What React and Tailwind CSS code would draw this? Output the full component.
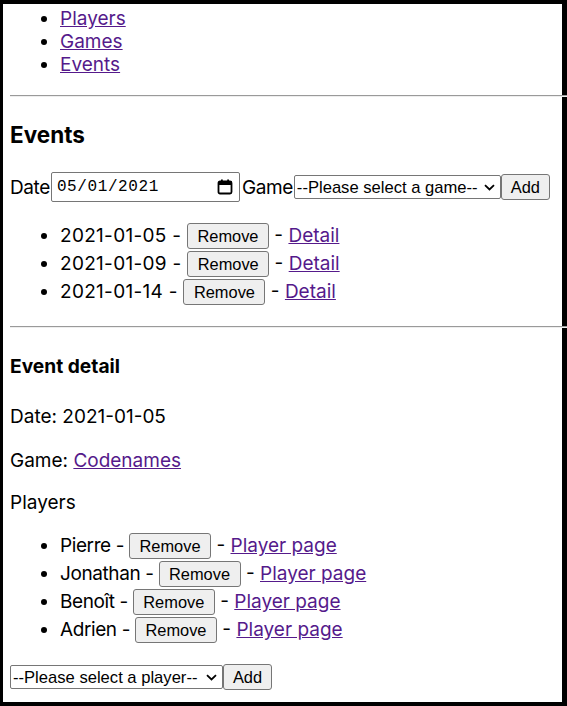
import React from "react";

function Btn({ children, className = "" }) {
  return (
    <span
      className={
        "inline-block h-[26px] leading-[24px] border border-[#767676] rounded-[3px] bg-[#efefef] text-black text-[16.4px] font-['Liberation_Sans',Arial,sans-serif] " +
        className
      }
    >
      {children}
    </span>
  );
}

function Chevron() {
  return (
    <svg width="11" height="7" viewBox="0 0 11 7" className="shrink-0">
      <path d="M1 1.2 L5.5 5.5 L10 1.2" fill="none" stroke="#000" strokeWidth="1.8" />
    </svg>
  );
}

function Select({ text, w }) {
  return (
    <span
      className={
        "inline-flex items-center justify-between h-[24px] border border-[#767676] rounded-[2px] bg-white pl-[2px] pr-[5px] text-[16.6px] font-['Liberation_Sans',Arial,sans-serif] text-black " +
        w
      }
    >
      <span>{text}</span>
      <Chevron />
    </span>
  );
}

function Link({ children }) {
  return <a className="text-[#551a8b] underline">{children}</a>;
}

export default function App() {
  return (
    <div className="w-[567px] h-[706px] bg-black pt-[4px] pl-[3px] overflow-hidden">
      <div className="w-[559px] h-[698px] bg-white pl-[7px] text-black font-['Inter',sans-serif] text-[19px] leading-[23px]">
        <ul className="list-disc pl-[50px] pt-[3px]">
          <li><Link>Players</Link></li>
          <li><Link>Games</Link></li>
          <li><Link>Events</Link></li>
        </ul>
        <div className="mt-[19px] h-[2px] w-[557px] border-t border-b border-t-[#9a9a9a] border-b-[#eeeeee]" />
        <h2 className="mt-[21px] text-[22.5px] leading-[34px] font-bold">Events</h2>
        <div className="mt-[20px] h-[30px] flex items-center">
          <span className="tracking-[-0.4px]">Date</span>
          <span className="ml-[1px] w-[189px] h-[30px] border border-[#767676] rounded-[2px] flex items-center justify-between pl-[5px] pr-[6px]">
            <span className="font-['Liberation_Mono',monospace] text-[16px] tracking-[0.6px]">05/01/2021</span>
            <svg width="16" height="16" viewBox="0 0 16 16">
              <rect x="1.5" y="2.5" width="13" height="12" rx="1.5" fill="none" stroke="#000" strokeWidth="1.8" />
              <rect x="1.5" y="2.5" width="13" height="3.5" fill="#000" />
              <rect x="4" y="0.5" width="1.8" height="3" fill="#000" />
              <rect x="10.2" y="0.5" width="1.8" height="3" fill="#000" />
            </svg>
          </span>
          <span className="ml-[2px] tracking-[-0.4px]">Game</span>
          <span className="ml-[1px]"><Select text="--Please select a game--" w="w-[207px]" /></span>
          <Btn className="w-[49px] text-center">Add</Btn>
        </div>
        <ul className="list-disc pl-[50px] mt-[20px]">
          {["2021-01-05", "2021-01-09", "2021-01-14"].map((d) => (
            <li key={d} className="h-[28px] leading-[28px]">
              <span className="tracking-[0.3px]">{d + " - "}</span>
              <Btn className="align-top mt-[1px] px-[9.5px]">Remove</Btn>
              {" - "}
              <Link>Detail</Link>
            </li>
          ))}
        </ul>
        <div className="mt-[20px] h-[2px] w-[557px] border-t border-b border-t-[#9a9a9a] border-b-[#eeeeee]" />
        <h3 className="mt-[25px] text-[19.2px] leading-[27px] font-bold">Event detail</h3>
        <p className="mt-[25px]">Date: 2021-01-05</p>
        <p className="mt-[21px]">Game: <Link>Codenames</Link></p>
        <p className="mt-[19px]">Players</p>
        <ul className="list-disc pl-[50px] mt-[18px]">
          {["Pierre", "Jonathan", "Benoît", "Adrien"].map((n) => (
            <li key={n} className="h-[28px] leading-[28px]">
              <span className="tracking-[-0.4px]">{n + " - "}</span>
              <Btn className="align-top mt-[1px] px-[9.5px]">Remove</Btn>
              {" - "}
              <Link>Player page</Link>
            </li>
          ))}
        </ul>
        <div className="mt-[20px] h-[26px] flex items-center">
          <Select text="--Please select a player--" w="w-[213px]" />
          <Btn className="w-[49px] text-center">Add</Btn>
        </div>
      </div>
    </div>
  );
}
